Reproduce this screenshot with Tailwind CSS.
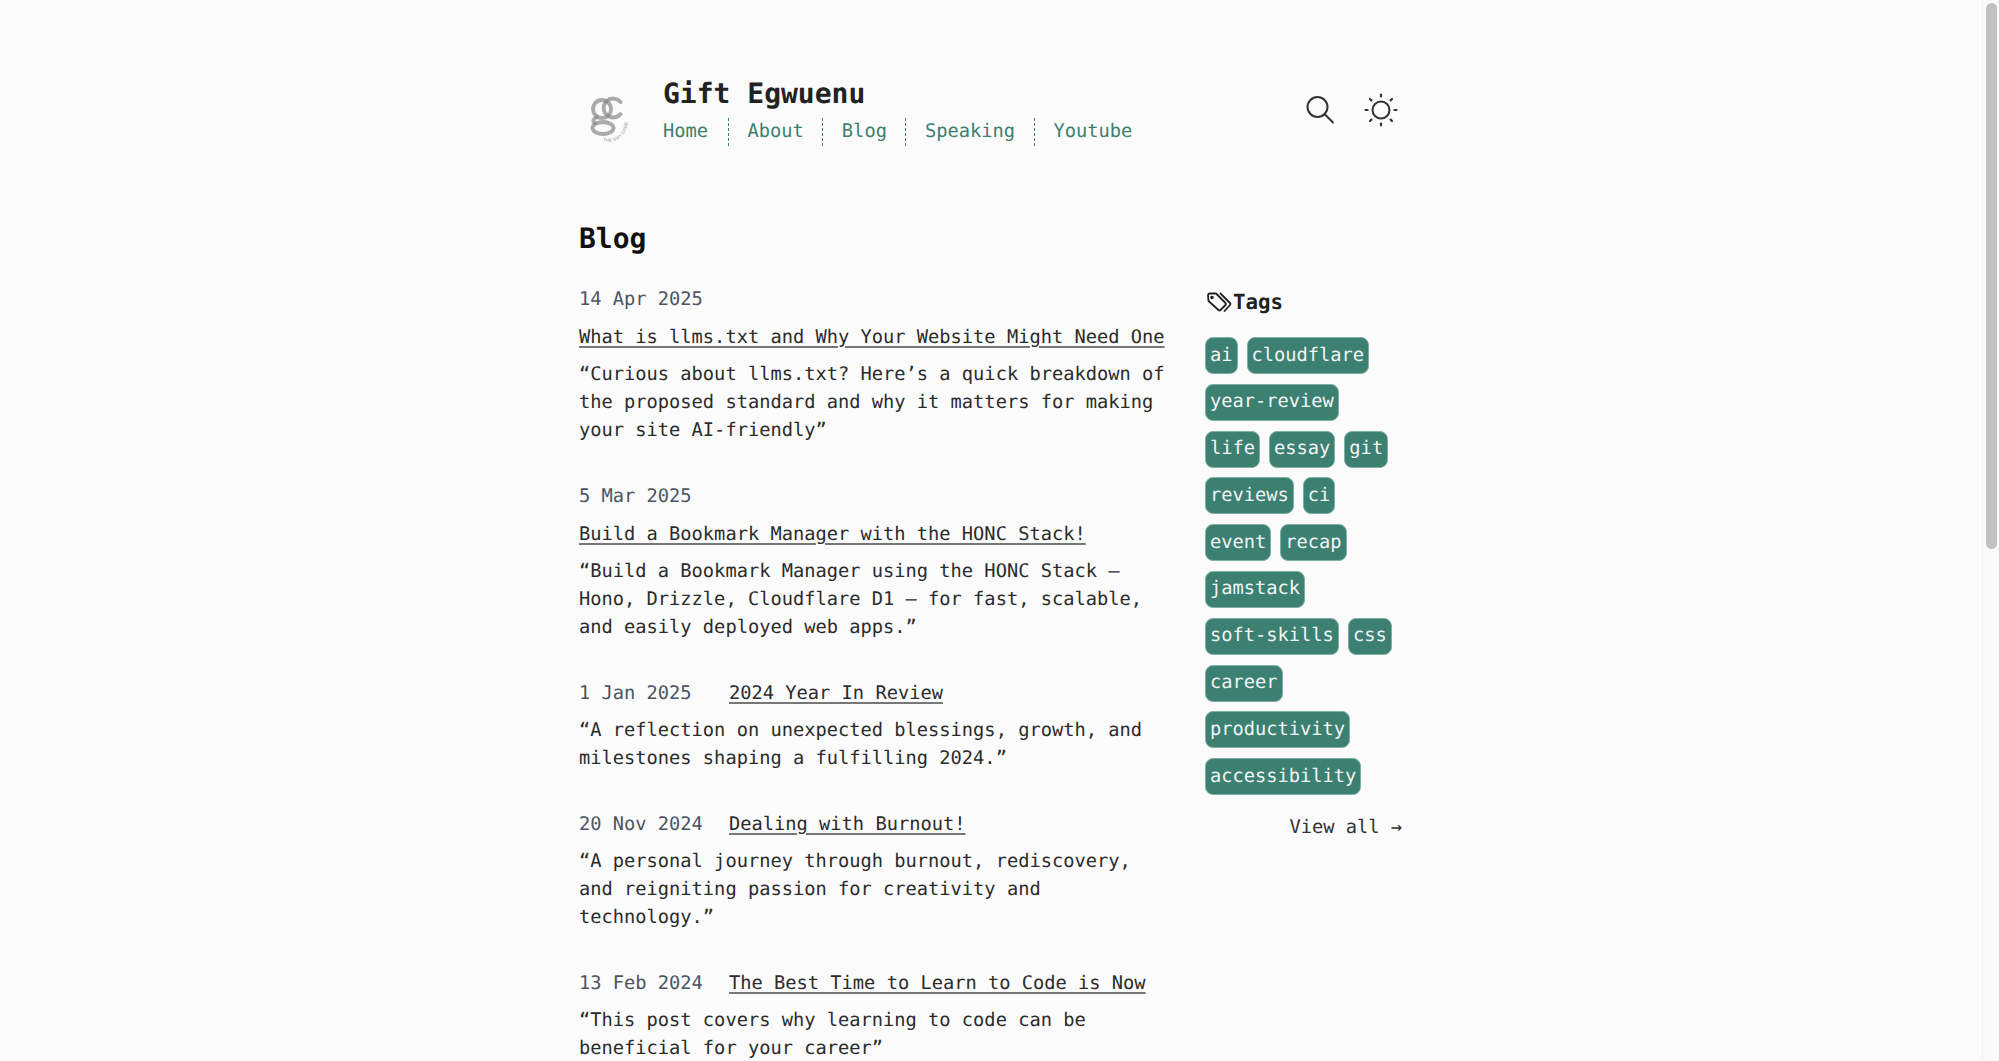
<!DOCTYPE html>
<html lang="en">

<head>
  <meta charset="UTF-8" />
  <title>Blog | Gift Egwuenu</title>
  <script src="https://cdn.jsdelivr.net/npm/@tailwindcss/browser@4"></script>
</head>

<body class="bg-[#fbfbfb] text-[#2b2b2b] font-['DejaVu_Sans_Mono',monospace] text-[18.72px] leading-[28px] [text-rendering:geometricPrecision] h-[1061px] overflow-hidden flex">

  <div class="flex-1 min-w-0 pl-[579px]">
    <div class="w-[824px]">

      <!-- Header -->
      <header class="flex items-start pt-[80px]">
        <svg class="w-[62px] h-[62px] mt-[12px] mr-[22px] shrink-0" viewBox="0 0 62 62" fill="none">
          <g stroke="#888" stroke-opacity="0.7" stroke-width="3.800" stroke-linecap="round">
            <circle cx="23" cy="17" r="9" />
            <path d="M41.500 10 A 9.500 9.500 0 1 0 41.500 22" />
            <path d="M18 25 Q 12 28 16 31" />
            <ellipse cx="24" cy="36" rx="10.500" ry="6" />
          </g>
          <path id="logoArc" d="M24 49 Q 46 53 49 28" />
          <text font-family="Liberation Sans" font-size="4" fill="#777" letter-spacing="0.400"><textPath href="#logoArc">THE GIFT CODE</textPath></text>
        </svg>
        <div class="flex-1">
          <h1 class="text-[28px] leading-[28px] font-bold text-[#222]">Gift Egwuenu</h1>
          <nav class="flex text-[#3b8070] mt-[10px]">
            <a class="pr-[20px] border-r border-dashed border-[#3b8070]">Home</a>
            <a class="px-[18.5px] border-r border-dashed border-[#3b8070]">About</a>
            <a class="px-[18.5px] border-r border-dashed border-[#3b8070]">Blog</a>
            <a class="px-[18.5px] border-r border-dashed border-[#3b8070]">Speaking</a>
            <a class="pl-[19px]">Youtube</a>
          </nav>
        </div>
        <div class="flex items-center gap-[29px] mt-[13px] mr-[5px]">
          <svg class="w-[30px] h-[30px]" viewBox="0 0 30 30" fill="none" stroke="#333" stroke-width="2" stroke-linecap="round">
            <circle cx="12.500" cy="12" r="10" />
            <path d="M20 19.500 L28 27.500" />
          </svg>
          <svg class="w-[34px] h-[34px]" viewBox="0 0 34 34" fill="none" stroke="#333" stroke-linecap="round">
            <circle cx="17" cy="17" r="8.500" stroke-width="2" />
            <path stroke-width="2.200" d="M17 1.500v2M17 30.500v2M1.500 17h2M30.500 17h2M6 6l1.400 1.400M26.600 26.600l1.400 1.400M6 28l1.400-1.400M26.600 7.400l1.400-1.400" />
          </svg>
        </div>
      </header>

      <h2 class="text-[28px] leading-[34px] font-bold text-[#111] mt-[68px]">Blog</h2>

      <div class="flex mt-[30px]">

        <!-- Posts -->
        <main class="w-[590px] mr-[36px] shrink-0">
          <article class="mb-[38px]">
            <div class="flex flex-wrap gap-y-[10px] mb-[9px]">
              <time class="w-[150px] text-[#4b5563]">14 Apr 2025</time>
              <a class="underline decoration-2 decoration-[#777] underline-offset-[3px]">What is llms.txt and Why Your Website Might Need One</a>
            </div>
            <p>“Curious about llms.txt? Here’s a quick breakdown of the proposed standard and why it matters for making your site AI-friendly”</p>
          </article>
          <article class="mb-[38px]">
            <div class="flex flex-wrap gap-y-[10px] mb-[9px]">
              <time class="w-[150px] text-[#4b5563]">5 Mar 2025</time>
              <a class="underline decoration-2 decoration-[#777] underline-offset-[3px]">Build a Bookmark Manager with the HONC Stack!</a>
            </div>
            <p>“Build a Bookmark Manager using the HONC Stack — Hono, Drizzle, Cloudflare D1 — for fast, scalable, and easily deployed web apps.”</p>
          </article>
          <article class="mb-[38px]">
            <div class="flex flex-wrap gap-y-[10px] mb-[9px]">
              <time class="w-[150px] text-[#4b5563]">1 Jan 2025</time>
              <a class="underline decoration-2 decoration-[#777] underline-offset-[3px]">2024 Year In Review</a>
            </div>
            <p>“A reflection on unexpected blessings, growth, and milestones shaping a fulfilling 2024.”</p>
          </article>
          <article class="mb-[38px]">
            <div class="flex flex-wrap gap-y-[10px] mb-[9px]">
              <time class="w-[150px] text-[#4b5563]">20 Nov 2024</time>
              <a class="underline decoration-2 decoration-[#777] underline-offset-[3px]">Dealing with Burnout!</a>
            </div>
            <p>“A personal journey through burnout, rediscovery, and reigniting passion for creativity and technology.”</p>
          </article>
          <article class="mb-[38px]">
            <div class="flex flex-wrap gap-y-[10px] mb-[9px]">
              <time class="w-[150px] text-[#4b5563]">13 Feb 2024</time>
              <a class="underline decoration-2 decoration-[#777] underline-offset-[3px]">The Best Time to Learn to Code is Now</a>
            </div>
            <p>“This post covers why learning to code can be beneficial for your career”</p>
          </article>
        </main>

        <!-- Tags -->
        <aside class="w-[197px] shrink-0 pt-[2px]">
          <h3 class="flex items-center text-[20.8px] leading-[28px] font-bold text-[#222]">
            <svg class="w-[28px] h-[24px] shrink-0" viewBox="0 0 28 24" fill="none" stroke="#222" stroke-width="1.800" stroke-linejoin="round" stroke-linecap="round">
              <path d="M3 5.500 Q3 3.500 5 3.500 L11 3.500 L20.500 13 Q21.500 14 20.500 15 L15.500 20 Q14.500 21 13.500 20 L3.500 11 Z" />
              <path d="M15.500 3.500 L25 13 Q26 14 25 15 L19.500 21" />
              <circle cx="7" cy="7.500" r="0.900" />
            </svg>
            Tags
          </h3>
          <div class="flex flex-wrap gap-x-[9px] gap-y-[9.8px] mt-[21px] text-[#f3f4f6] text-[18.72px]">
            <a class="h-[37px] px-[4px] flex items-center rounded-[8px] bg-[#3b8070] border border-[#7fb0a5]">ai</a>
            <a class="h-[37px] px-[4px] flex items-center rounded-[8px] bg-[#3b8070] border border-[#7fb0a5]">cloudflare</a>
            <a class="h-[37px] px-[4px] flex items-center rounded-[8px] bg-[#3b8070] border border-[#7fb0a5]">year-review</a>
            <a class="h-[37px] px-[4px] flex items-center rounded-[8px] bg-[#3b8070] border border-[#7fb0a5]">life</a>
            <a class="h-[37px] px-[4px] flex items-center rounded-[8px] bg-[#3b8070] border border-[#7fb0a5]">essay</a>
            <a class="h-[37px] px-[4px] flex items-center rounded-[8px] bg-[#3b8070] border border-[#7fb0a5]">git</a>
            <a class="h-[37px] px-[4px] flex items-center rounded-[8px] bg-[#3b8070] border border-[#7fb0a5]">reviews</a>
            <a class="h-[37px] px-[4px] flex items-center rounded-[8px] bg-[#3b8070] border border-[#7fb0a5]">ci</a>
            <a class="h-[37px] px-[4px] flex items-center rounded-[8px] bg-[#3b8070] border border-[#7fb0a5]">event</a>
            <a class="h-[37px] px-[4px] flex items-center rounded-[8px] bg-[#3b8070] border border-[#7fb0a5]">recap</a>
            <a class="h-[37px] px-[4px] flex items-center rounded-[8px] bg-[#3b8070] border border-[#7fb0a5]">jamstack</a>
            <a class="h-[37px] px-[4px] flex items-center rounded-[8px] bg-[#3b8070] border border-[#7fb0a5]">soft-skills</a>
            <a class="h-[37px] px-[4px] flex items-center rounded-[8px] bg-[#3b8070] border border-[#7fb0a5]">css</a>
            <a class="h-[37px] px-[4px] flex items-center rounded-[8px] bg-[#3b8070] border border-[#7fb0a5]">career</a>
            <a class="h-[37px] px-[4px] flex items-center rounded-[8px] bg-[#3b8070] border border-[#7fb0a5]">productivity</a>
            <a class="h-[37px] px-[4px] flex items-center rounded-[8px] bg-[#3b8070] border border-[#7fb0a5]">accessibility</a>
          </div>
          <div class="text-right mt-[19px] text-[#333]">View all →</div>
        </aside>
      </div>
    </div>
  </div>

  <!-- Scrollbar -->
  <div class="w-[17px] shrink-0 bg-[#fafafa] border-l border-[#f0f0f0] pl-[3px] pt-[3px]">
    <div class="w-[11px] h-[546px] rounded-full bg-[#c1c1c1]"></div>
  </div>

</body>
</html>
